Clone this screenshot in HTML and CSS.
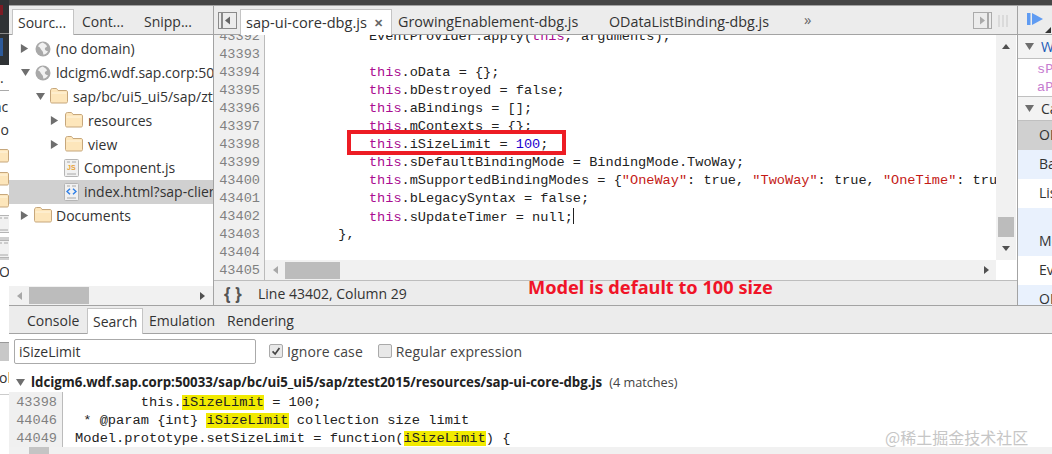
FILE: index.html
```html
<!DOCTYPE html>
<html lang="en">
<head>
<meta charset="utf-8">
<title>DevTools</title>
<link rel="stylesheet" href="styles.css">
</head>
<body>
<svg class="defs" width="0" height="0" aria-hidden="true">
  <symbol id="globe" viewBox="0 0 16 16">
    <circle cx="8" cy="8" r="7.5" fill="#a9a9a9"/>
    <path d="M8 1.5c-2 .4-4.2 1.8-5 4 1.2.2 2.2 1 2.6 2.2.4 1.4 1.6 1.600 2.200 3 .4 1 .2 2 .8 3 2-.4 3.500-1.600 4.400-3.400-1.300-.4-2.400-.6-3-1.800-.6-1.300.4-2.400 1.800-2.600.2-.8 0-1.400-.6-2-1-.8-2-1.800-3.200-2.200z" fill="#f1f1f1"/>
  </symbol>
  <symbol id="folder" viewBox="0 0 18 16">
    <path d="M.5 3c0-1.400.7-2.500 2-2.500h3.500c1 0 1.500 1 2 2h8c1 0 1.500.7 1.500 1.500v9.500c0 1-.6 1.500-1.500 1.500h-14c-1 0-1.500-.6-1.500-1.500z" fill="#fde6bb" stroke="#c6a77c"/>
    <path d="M1.500 5h15" stroke="#fff5df"/>
  </symbol>
  <symbol id="doc" viewBox="0 0 15 18">
    <rect x=".5" y=".5" width="14" height="17" rx="1" fill="#f1f1f1" stroke="#b5b5b5"/>
    <path d="M3 3h3M8 3h4M3 15h9" stroke="#a8a8a8"/>
  </symbol>
  <symbol id="tri-right" viewBox="0 0 10 12"><path d="M1 1l8 5-8 5z" fill="#6e6e6e"/></symbol>
  <symbol id="tri-down" viewBox="0 0 12 10"><path d="M1 1h10l-5 8z" fill="#6e6e6e"/></symbol>
</svg>

<div class="app">
  <aside class="strip">
    <div class="strip-dark">
      <span class="strip-red"></span>
      <span class="strip-rule"></span>
      <span class="strip-box"></span>
    </div>
    <div class="strip-lit">
      <span class="strip-frag strip-rule-light">.</span>
      <span class="strip-frag strip-nc">nc</span>
      <span class="strip-frag strip-do">do</span>
      <svg class="strip-icon strip-first"><use href="#folder"/></svg>
      <svg class="strip-icon"><use href="#folder"/></svg>
      <svg class="strip-icon"><use href="#folder"/></svg>
      <svg class="strip-doc"><use href="#doc"/></svg>
      <div class="strip-sel"><svg class="strip-doc"><use href="#doc"/></svg></div>
      <span class="strip-frag strip-oc">Oc</span>
      <div class="strip-block"></div>
      <span class="strip-frag strip-ol">ol</span>
    </div>
  </aside>

  <div class="devtools">
    <div class="topbar"></div>

    <div class="upper">
      <section class="sidebar">
        <nav class="bar side-tabs">
          <span class="tab tab-on side-t1">Sourc...</span>
          <span class="tab side-t2">Cont...</span>
          <span class="tab side-t3">Snipp...</span>
        </nav>
        <div class="tree">
          <div class="row l0"><svg class="arrow"><use href="#tri-right"/></svg><svg class="ico-g"><use href="#globe"/></svg><span>(no domain)</span></div>
          <div class="row l0"><svg class="arrow-d"><use href="#tri-down"/></svg><svg class="ico-g"><use href="#globe"/></svg><span>ldcigm6.wdf.sap.corp:50</span></div>
          <div class="row l1"><svg class="arrow-d"><use href="#tri-down"/></svg><svg class="ico-f"><use href="#folder"/></svg><span>sap/bc/ui5_ui5/sap/zt</span></div>
          <div class="row l2"><svg class="arrow"><use href="#tri-right"/></svg><svg class="ico-f"><use href="#folder"/></svg><span>resources</span></div>
          <div class="row l2"><svg class="arrow"><use href="#tri-right"/></svg><svg class="ico-f"><use href="#folder"/></svg><span>view</span></div>
          <div class="row l3"><span class="file"><svg class="ico-d"><use href="#doc"/></svg><b class="js">JS</b></span><span>Component.js</span></div>
          <div class="row l3 row-sel"><span class="file"><svg class="ico-d"><use href="#doc"/></svg><svg class="ico-c" viewBox="0 0 11 7"><path d="M4 .8L1 3.500 4 6.200M7 .8l3 2.700-3 2.700" fill="none" stroke="#2f7fe6" stroke-width="1.500"/></svg></span><span>index.html?sap-clien</span></div>
          <div class="row l0"><svg class="arrow"><use href="#tri-right"/></svg><svg class="ico-f ico-f0"><use href="#folder"/></svg><span>Documents</span></div>
        </div>
        <div class="hscroll side-scroll">
          <i class="ar ar-l"></i><i class="thumb side-thumb"></i><i class="grow"></i><i class="ar ar-r"></i>
        </div>
      </section>

      <section class="editor">
        <nav class="bar ed-tabs">
          <svg class="pane-btn" viewBox="0 0 19 17"><rect x=".5" y=".5" width="18" height="16" fill="none" stroke="#8a8a8a"/><path d="M4 1v15" stroke="#8a8a8a" stroke-width="2"/><path d="M12 4.500v8l-5-4z" fill="#666"/></svg>
          <span class="tab tab-on ed-t1">sap-ui-core-dbg.js<em class="close">✕</em></span>
          <span class="tab ed-t2">GrowingEnablement-dbg.js</span>
          <span class="tab ed-t3">ODataListBinding-dbg.js</span>
          <span class="more">»</span>
          <svg class="pane-btn pane-r" viewBox="0 0 19 17"><rect x=".5" y=".5" width="18" height="16" fill="none" stroke="#aaa"/><path d="M15 1v15" stroke="#aaa" stroke-width="2"/><path d="M7 4.500v8l5-4z" fill="#aaa"/></svg>
          <svg class="grip" viewBox="0 0 10 12"><path d="M1 0v12M5 0v12M9 0v12" stroke="#c8c8c8"/></svg>
        </nav>
        <div class="ed-body">
          <div class="gutter">
            <div>43392</div><div>43393</div><div>43394</div><div>43395</div><div>43396</div><div>43397</div><div>43398</div><div>43399</div><div>43400</div><div>43401</div><div>43402</div><div>43403</div><div>43404</div><div>43405</div>
          </div>
          <div class="code-col">
            <div class="code">
<div class="ln">            EventProvider.apply(<i class="k">this</i>, arguments);</div>
<div class="ln"> </div>
<div class="ln">            <i class="k">this</i>.oData = {};</div>
<div class="ln">            <i class="k">this</i>.bDestroyed = false;</div>
<div class="ln">            <i class="k">this</i>.aBindings = [];</div>
<div class="ln">            <i class="k">this</i>.mContexts = {};</div>
<div class="ln">            <i class="k">this</i>.iSizeLimit = <i class="n">100</i>;</div>
<div class="ln">            <i class="k">this</i>.sDefaultBindingMode = BindingMode.TwoWay;</div>
<div class="ln">            <i class="k">this</i>.mSupportedBindingModes = {<i class="s">"OneWay"</i>: true, <i class="s">"TwoWay"</i>: true, <i class="s">"OneTime"</i>: true, <i class="s">"OneWayToSource"</i>: true};</div>
<div class="ln">            <i class="k">this</i>.bLegacySyntax = false;</div>
<div class="ln">            <i class="k">this</i>.sUpdateTimer = null;<span class="caret"></span></div>
<div class="ln ln-close">        },</div>
            </div>
            <div class="hscroll code-scroll">
              <i class="ar ar-l"></i><i class="thumb code-thumb"></i><i class="grow"></i><i class="ar ar-r"></i>
            </div>
          </div>
          <div class="v-col">
            <div class="vscroll">
              <i class="ar-u"></i><i class="grow"></i><i class="v-thumb"></i><i class="ar-d"></i>
            </div>
            <div class="corner"></div>
          </div>
        </div>
        <div class="status">
          <b class="braces">{ }</b>
          <span>Line 43402, Column 29</span>
        </div>
      </section>

      <section class="debug">
        <div class="debug-bar">
          <svg class="play" viewBox="0 0 18 14"><rect x="0" y="1" width="3.500" height="12" fill="#5f9bf2"/><path d="M5 1l11 6-11 6z" fill="#5f9bf2"/></svg>
          <i class="corner-tri"></i>
        </div>
        <div class="sec"><svg class="arrow-d"><use href="#tri-down"/></svg><span class="sec-w">Watch</span></div>
        <div class="vars"><div>sPath</div><div>aParams</div></div>
        <div class="sec"><svg class="arrow-d"><use href="#tri-down"/></svg><span>Call Stack</span></div>
        <div class="fr fr-sel"><span>OData</span></div>
        <div class="fr fr-blue"><span>Base</span></div>
        <div class="fr"><span>List</span></div>
        <div class="fr fr-blue fr-tall"><span>Model</span></div>
        <div class="fr"><span>Event</span></div>
        <div class="fr fr-blue fr-last"><span>OData</span></div>
      </section>
    </div>

    <section class="drawer">
      <nav class="bar dr-tabs">
        <span class="tab dr-t1">Console</span>
        <span class="tab tab-on dr-t2">Search</span>
        <span class="tab dr-t3">Emulation</span>
        <span class="tab dr-t4">Rendering</span>
      </nav>
      <div class="search-row">
        <div class="input">iSizeLimit</div>
        <span class="cb cb-on"><svg viewBox="0 0 14 14"><path d="M3 7.500l3 3 5-7" fill="none" stroke="#444" stroke-width="2"/></svg></span>
        <label class="cb-l">Ignore case</label>
        <span class="cb"></span>
        <label class="cb-l cb-l2">Regular expression</label>
      </div>
      <div class="res-head">
        <svg class="arrow-d res-arrow"><use href="#tri-down"/></svg>
        <b>ldcigm6.wdf.sap.corp:50033/sap/bc/ui5_ui5/sap/ztest2015/resources/sap-ui-core-dbg.js</b>
        <span class="res-count">(4 matches)</span>
      </div>
      <div class="res-body">
        <div class="res-gutter"><div>43398</div><div>44046</div><div>44049</div></div>
        <div class="res-code">
<div class="ln">        this.<mark>iSizeLimit</mark> = 100;</div>
<div class="ln"> * @param {int} <mark>iSizeLimit</mark> collection size limit</div>
<div class="ln">Model.prototype.setSizeLimit = function(<mark>iSizeLimit</mark>) {</div>
        </div>
      </div>
      <div class="dr-scroll"><i class="dr-thumb"></i></div>
    </section>
  </div>

  <div class="redbox"></div>
  <div class="note">Model is default to 100 size</div>
  <div class="watermark">@稀土掘金技术社区</div>
</div>
</body>
</html>
```
FILE: styles.css
```css
* { box-sizing: border-box; }
html, body { margin: 0; padding: 0; }
body { background: #fff; font-family: "Open Sans", "Noto Sans", sans-serif; color: #333; }
.defs { position: absolute; }
i, em { font-style: normal; }

.app { position: relative; width: 1052px; height: 454px; overflow: hidden; display: flex; }

/* left strip: a sliver of the page behind the devtools */
.strip { width: 9px; flex: none; display: flex; flex-direction: column; overflow: hidden; }
.strip-dark { height: 65px; background: #2f3235; display: flex; flex-direction: column; flex: none; }
.strip-red { height: 10px; width: 3px; margin-top: 5px; background: #7c1b24; }
.strip-rule { height: 1px; background: #8a8a8a; margin-top: 18px; }
.strip-box { width: 3px; height: 18px; margin-top: 4px; background: #2d5a9a; }
.strip-lit { flex: 1; display: flex; flex-direction: column; font-size: 14px; line-height: 22px; }
.strip-frag { display: block; height: 22px; margin-left: -7px; white-space: nowrap; flex: none; }
.strip-rule-light { height: 26px; line-height: 26px; margin-left: 0; border-bottom: 1px solid #aaa; }
.strip-nc { margin-top: 5px; }
.strip-do { margin-top: 1px; margin-left: -8px; }
.strip-icon { width: 18px; height: 16px; margin: 0 0 6.5px -9px; flex: none; }
.strip-first { margin-top: 6px; }
.strip-doc { width: 15px; height: 18px; margin: 0 0 4px -4px; flex: none; display: block; }
.strip-sel { background: #d0d0d0; height: 23px; flex: none; padding-top: 3px; }
.strip-oc { margin-top: 1px; margin-left: -1px; }
.strip-block { height: 19px; margin-top: 59px; background: #c8c8c8; border-top: 1px solid #999; flex: none; }
.strip-ol { margin-left: -1px; margin-top: 6px; border-bottom: 1px solid #ccc; height: 28px; }

.devtools { flex: 1; min-width: 0; display: flex; flex-direction: column; }
.topbar { height: 6px; flex: none; background: #464646; border-bottom: 1px solid #a3a3a3; }

.upper { height: 300px; flex: none; display: flex; border-bottom: 1px solid #a3a3a3; }

.bar { height: 29px; flex: none; background: #ececec; border-bottom: 1px solid #a3a3a3; display: flex; align-items: flex-end; font-size: 14px; white-space: nowrap; }
.tab { display: block; height: 25px; line-height: 25px; color: #333; flex: none; }
.tab-on { background: #fff; border: 1px solid #c4c4c4; border-bottom: 0; height: 26px; margin-bottom: -1px; position: relative; }

/* sources sidebar */
.sidebar { width: 205px; flex: none; display: flex; flex-direction: column; border-right: 1px solid #a3a3a3; }
.side-tabs { padding-left: 3px; }
.side-t1 { width: 62px; padding-left: 5px; }
.side-t2 { margin-left: 8px; width: 62px; }
.tree { flex: 1; overflow: hidden; padding-top: 2px; font-size: 14px; }
.row { height: 23.8px; display: flex; align-items: center; white-space: nowrap; color: #333; }
.row > span:last-child { display: block; }
.l0 { padding-left: 11px; }
.l1 { padding-left: 26px; }
.l2 { padding-left: 41px; }
.l3 { padding-left: 55px; }
.row-sel { background: #d0d0d0; }
.arrow { width: 9px; height: 11px; flex: none; margin-right: 6px; }
.arrow-d { width: 11px; height: 9px; flex: none; margin-right: 4px; }
.ico-g { width: 16px; height: 16px; flex: none; margin-right: 5px; }
.ico-f { width: 18px; height: 16px; flex: none; margin-right: 5px; }
.ico-f0 { margin-right: 4px; margin-left: -1px; }
.file { position: relative; width: 15px; height: 18px; flex: none; margin-right: 5px; }
.ico-d { width: 15px; height: 18px; display: block; }
.js { position: absolute; left: 3px; top: 5px; font: bold 7px/8px "Liberation Sans", sans-serif; color: #e8a33a; }
.ico-c { position: absolute; left: 2px; top: 5px; width: 11px; height: 7px; }

.hscroll { display: flex; align-items: center; height: 19px; background: #f1f1f1; flex: none; }
.ar { width: 0; height: 0; border-top: 4px solid transparent; border-bottom: 4px solid transparent; flex: none; }
.ar-l { border-right: 5px solid #a8a8a8; }
.ar-r { border-left: 5px solid #505050; }
.grow { flex: 1; }
.thumb { background: #bcbcbc; flex: none; height: 17px; }
.side-scroll { padding: 0 8px 0 8px; }
.side-thumb { width: 60px; margin-left: 7px; }

/* editor */
.editor { width: 804px; flex: none; display: flex; flex-direction: column; border-right: 1px solid #a3a3a3; }
.ed-tabs { position: relative; padding-left: 4px; }
.ed-tabs .tab { font-size: 14.3px; }
.ed-tabs .ed-t1 { font-size: 14.6px; }
.pane-btn { width: 19px; height: 17px; flex: none; margin: 0 3px 5px 0; }
.ed-t1 { width: 152px; padding-left: 5px; display: flex; }
.close { margin-left: 7px; font-size: 11px; font-weight: 700; color: #666; line-height: 25px; }
.ed-t2 { margin-left: 6px; width: 211px; }
.ed-t3 { width: 195px; }
.more { display: block; height: 25px; line-height: 20px; font-size: 15px; color: #666; flex: none; }
.pane-r { margin-left: 162px; margin-right: 6px; }
.grip { width: 10px; height: 12px; flex: none; margin-bottom: 7px; }

.ed-body { height: 245px; flex: none; display: flex; overflow: hidden; }
.gutter { width: 51px; flex: none; background: #f0f0f0; border-right: 1px solid #bbb; overflow: hidden; text-align: right; font: 13.6px/18px "Liberation Mono", monospace; color: #808080; padding-right: 4px; }
.gutter > div:first-child { margin-top: -7px; }
.code-col { flex: 1; min-width: 0; display: flex; flex-direction: column; }
.code { flex: 1; overflow: hidden; padding-left: 6px; font: 13.6px/18px "Liberation Mono", monospace; color: #222; }
.code .ln:first-child { margin-top: -7px; }
.ln { height: 18px; white-space: pre; }
.ln-close { padding-left: 2px; }
.k { color: #aa0d91; }
.n { color: #1c00cf; }
.s { color: #c41a16; }
.caret { display: inline-block; width: 1px; height: 16px; background: #222; vertical-align: -3px; }
.code-scroll { height: 20px; padding: 0 7px 0 8px; }
.code-thumb { width: 55px; margin-left: 7px; }
.v-col { width: 21px; flex: none; display: flex; flex-direction: column; padding-right: 1px; }
.vscroll { flex: 1; background: #f1f1f1; display: flex; flex-direction: column; align-items: center; padding: 9px 0 9px; }
.ar-u, .ar-d { width: 0; height: 0; border-left: 4px solid transparent; border-right: 4px solid transparent; flex: none; }
.ar-u { border-bottom: 5px solid #505050; }
.ar-d { border-top: 5px solid #505050; margin-top: 9px; }
.v-thumb { width: 16px; height: 20px; background: #bcbcbc; flex: none; }
.corner { height: 20px; flex: none; background: #fff; }
.status { flex: 1; background: #ececec; border-top: 1px solid #bdbdbd; display: flex; align-items: center; padding-left: 10px; font-size: 14px; color: #333; }
.braces { font-weight: 700; width: 34px; font-size: 17px; color: #555; flex: none; }

/* debugger pane */
.debug { flex: 1; min-width: 0; overflow: hidden; font-size: 14px; white-space: nowrap; }
.debug-bar { height: 29px; background: #ececec; border-bottom: 1px solid #a3a3a3; position: relative; padding: 6px 0 0 9px; }
.play { width: 18px; height: 14px; display: block; }
.corner-tri { position: absolute; left: 27px; bottom: 1px; width: 0; height: 0; border-left: 6px solid transparent; border-bottom: 6px solid #333; }
.sec { height: 24px; display: flex; align-items: center; padding-left: 6px; background: #f3f3f3; border-bottom: 1px solid #c0c0c0; color: #333; }
.sec .arrow-d { margin-right: 6px; }
.sec-w { color: #1c5bb8; }
.vars { height: 38px; padding: 2px 0 0 19px; color: #c67ccf; border-bottom: 1px solid #c0c0c0; font: 13.6px/18px "Liberation Mono", monospace; }
.fr { height: 29px; line-height: 28px; padding-left: 21px; color: #333; }
.fr-sel { background: #d0d0d0; }
.fr-blue { background: #e9f1fd; }
.fr-tall { height: 48px; padding-top: 19px; }
.fr-last { height: 20px; }

/* drawer */
.drawer { flex: 1; min-height: 0; display: flex; flex-direction: column; overflow: hidden; }
.dr-tabs { height: 28px; padding-left: 18px; }
.dr-t1 { width: 60px; }
.dr-t2 { width: 56px; padding-left: 5px; }
.dr-t3 { margin-left: 6px; width: 78px; }
.search-row { height: 36px; flex: none; display: flex; align-items: center; padding: 0 0 2px 5px; font-size: 14px; }
.input { width: 242px; height: 25px; border: 1px solid #aaa; border-radius: 2px; padding-left: 4px; line-height: 23px; color: #333; flex: none; }
.cb { width: 14px; height: 14px; flex: none; border: 1px solid #aaa; border-radius: 2px; background: #e8e8e8; margin-left: 13px; }
.cb svg { display: block; width: 12px; height: 12px; }
.cb-l { margin-left: 4px; color: #444; letter-spacing: .1px; }
.cb-l2 { margin-left: 4px; }
.cb-l + .cb { margin-left: 15px; }
.res-head { height: 22px; flex: none; display: flex; align-items: center; padding: 2px 0 0 6px; font-size: 13.27px; white-space: nowrap; color: #222; }
.res-arrow { margin-right: 5px; }
.res-count { margin-left: 7px; color: #444; font-size: 12.7px; }
.res-body { flex: 1; min-height: 0; display: flex; }
.res-gutter { width: 54px; flex: none; background: #f0f0f0; border-right: 1px solid #bbb; text-align: right; padding: 2px 5px 0 0; color: #808080; font: 13.6px/18px "Liberation Mono", monospace; }
.res-code { flex: 1; padding: 2px 0 0 12px; font: 13.7px/18px "Liberation Mono", monospace; color: #222; }
mark { background: #f1ea00; color: #222; }
.dr-scroll { height: 7px; flex: none; background: #f1f1f1; padding-left: 20px; }
.dr-thumb { display: block; width: 20px; height: 7px; background: #c4c4c4; }

/* annotations laid over the screenshot */
.redbox { position: absolute; left: 347px; top: 130px; width: 219px; height: 25px; border: 4px solid #ed1c24; }
.note { position: absolute; left: 528px; top: 276px; font: 700 18.2px/22px "Noto Sans", sans-serif; color: #f01428; white-space: nowrap; }
.watermark { position: absolute; left: 885px; top: 427px; font: 16px/20px "Noto Sans CJK SC", sans-serif; color: #c6c6c6; white-space: nowrap; }
```
